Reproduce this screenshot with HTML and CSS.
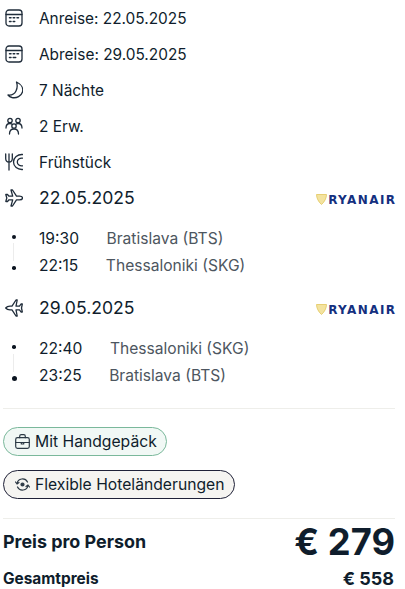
FILE: index.html
```html
<!DOCTYPE html>
<html lang="de">
<head>
<meta charset="utf-8">
<title>Angebot</title>
<link rel="stylesheet" href="styles.css">
</head>
<body>
<main class="card">
  <ul class="facts">
    <li class="fact">
      <svg class="icon" viewBox="0 0 18 18"><rect x="1" y="1" width="16" height="16" rx="3"/><path d="M1 5.500h16"/><path class="pip" d="M4.500 8.700h1.500M8.200 8.700h1.500M12 8.700h1.500M4.500 12.500h1.500M8.200 12.500h1.500"/></svg>
      <span>Anreise: 22.05.2025</span>
    </li>
    <li class="fact">
      <svg class="icon" viewBox="0 0 18 18"><rect x="1" y="1" width="16" height="16" rx="3"/><path d="M1 5.500h16"/><path class="pip" d="M4.500 8.700h1.500M8.200 8.700h1.500M12 8.700h1.500M4.500 12.500h1.500M8.200 12.500h2.500"/></svg>
      <span>Abreise: 29.05.2025</span>
    </li>
    <li class="fact">
      <svg class="icon" viewBox="0 0 18 18"><path d="M11.500 1C16 3 18.500 7 17.500 11 16.500 15 11.500 17.500 7 16.500 5.200 16 3.800 15 3 14c3.500.5 6.500-1 8-4 1.500-3 1.500-6 .5-9z"/></svg>
      <span>7 Nächte</span>
    </li>
    <li class="fact">
      <svg class="icon" viewBox="0 0 18 18"><circle cx="5" cy="3.500" r="2.200"/><circle cx="13" cy="3.500" r="2.200"/><circle cx="9" cy="9" r="2.200"/><path d="M1 11c0-3 1.500-4.500 4-4.500.8 0 1.300.2 1.800.5M17 11c0-3-1.500-4.500-4-4.500-.8 0-1.300.2-1.800.5M4.500 17c0-3 1.800-5 4.500-5s4.500 2 4.500 5"/></svg>
      <span>2 Erw.</span>
    </li>
    <li class="fact">
      <svg class="icon" viewBox="0 0 18 18"><path d="M.7 1v4.500c0 2.200 1.300 3.500 3.300 3.500s3.300-1.300 3.300-3.500V1M4 1v16"/><path d="M17.500 1.500C12.500 1.200 8.500 4.500 8.500 9s4 7.800 9 7.500M17.500 5.200c-2.800-.3-5.200 1.200-5.200 3.800s2.400 4.100 5.200 3.800"/></svg>
      <span>Frühstück</span>
    </li>
  </ul>

  <section class="leg">
    <header class="leg-head">
      <svg class="icon" viewBox="0 0 18 18"><path d="M17.500 9c0-1.200-1.200-1.800-3-1.800h-3L7.500 1H6l1.700 6.200H4L2.500 5.500H.8L1.800 9l-1 3.500h1.700L4 10.800h3.700L6 17h1.500l4-6.200h3c1.800 0 3-.6 3-1.800z"/></svg>
      <span class="leg-date">22.05.2025</span>
      <span class="brand"><svg class="harp" viewBox="0 0 11 11"><path d="M.5.500h10c0 3.500-2 7.500-5 10C2.500 8 .5 4 .5.500z"/></svg><span class="brand-name">RYANAIR</span></span>
    </header>
    <div class="stops">
      <div class="rail"><i class="dot"></i><i class="line"></i><i class="dot dot-small dot-end"></i></div>
      <div class="times">
        <div class="stop"><span>19:30</span><span class="place">Bratislava (BTS)</span></div>
        <div class="stop"><span>22:15</span><span class="place">Thessaloniki (SKG)</span></div>
      </div>
    </div>
  </section>

  <section class="leg">
    <header class="leg-head">
      <svg class="icon" viewBox="0 0 18 18"><path d="M.7 9c1-1.300 2.500-1.800 4.300-1.800h2L11 1h1.200l-1.200 6.200h3.500L16 5h1.300l-.8 4 .8 4H16l-1.500-2.200H11L12.200 17H11l-4-6.200H5C3.200 10.800 1.700 10.300.7 9z"/></svg>
      <span class="leg-date">29.05.2025</span>
      <span class="brand"><svg class="harp" viewBox="0 0 11 11"><path d="M.5.500h10c0 3.500-2 7.500-5 10C2.500 8 .5 4 .5.500z"/></svg><span class="brand-name">RYANAIR</span></span>
    </header>
    <div class="stops">
      <div class="rail"><i class="dot dot-small dot-start"></i><i class="line line-late"></i><i class="dot dot-large"></i></div>
      <div class="times">
        <div class="stop"><span>22:40</span><span class="place">Thessaloniki (SKG)</span></div>
        <div class="stop"><span>23:25</span><span class="place">Bratislava (BTS)</span></div>
      </div>
    </div>
  </section>

  <div class="chips">
    <span class="chip chip-green">
      <svg class="chip-icon" viewBox="0 0 15 15"><rect x=".7" y="3.700" width="13.600" height="10.600" rx="1.800"/><path d="M4.700 3.700V2.200A1.500 1.500 0 0 1 6.200.7h2.600a1.500 1.500 0 0 1 1.500 1.500v1.500M.7 8.500h13.600M6.300 8.500v1.500h2.400V8.500"/></svg>
      <span>Mit Handgepäck</span>
    </span>
    <span class="chip chip-dark">
      <svg class="chip-icon" viewBox="0 0 15 15"><path d="M2 6.500A5.600 5.600 0 0 1 12.500 5M13 8.500A5.600 5.600 0 0 1 2.500 10M.5 5l1.500 2L4 5.500M14.500 10L13 8l-2 1.500"/><circle class="core" cx="7.500" cy="7.500" r="1.500"/></svg>
      <span>Flexible Hoteländerungen</span>
    </span>
  </div>

  <section class="prices">
    <div class="price-row price-main">
      <span class="price-label">Preis pro Person</span>
      <span class="price-big">€ 279</span>
    </div>
    <div class="price-row total">
      <span>Gesamtpreis</span>
      <span class="price-total">€ 558</span>
    </div>
  </section>
</main>
</body>
</html>
```
FILE: styles.css
```css
* { box-sizing: border-box; }
html, body { margin: 0; padding: 0; background: #fff; }
body {
  font-family: Inter, "Liberation Sans", sans-serif;
  color: #0f1d2c;
  overflow: hidden;
}
.card { width: 405px; height: 589px; padding: 0 10px 0 3px; }
.facts { list-style: none; margin: 0; padding: 0; }
.fact {
  display: flex;
  align-items: center;
  gap: 16px;
  height: 36px;
  padding-left: 2px;
  font-size: 15.400px;
}
.icon {
  width: 18px;
  height: 18px;
  flex: none;
  fill: none;
  stroke: #1f2c3a;
  stroke-width: 1.300;
  stroke-linecap: round;
  stroke-linejoin: round;
}
.pip { stroke-width: 1.500; }
.leg { display: block; }
.leg-head {
  display: flex;
  align-items: center;
  gap: 16px;
  height: 36px;
  padding-left: 2px;
}
.leg-date { font-size: 17.600px; padding-bottom: 2px; }
.brand { margin-left: auto; padding-top: 3px; display: flex; align-items: center; gap: 1px; }
.harp { width: 11px; height: 11px; fill: #f3e3a0; stroke: #e2c65c; stroke-width: .8; }
.brand-name {
  font-family: "DejaVu Sans", sans-serif;
  font-weight: 700;
  font-size: 12px;
  letter-spacing: 1.400px;
  margin-right: -1.400px;
  color: #14307f;
}
.stops { display: flex; padding: 8px 0 8px 8px; margin-bottom: 3px; }
.rail { width: 28px; display: flex; flex-direction: column; align-items: flex-start; padding: 10.500px 0 0 .750px; }
.dot { width: 4.500px; height: 4.500px; border-radius: 50%; background: #0b1420; flex: none; }
.dot-small { width: 3.500px; height: 3.500px; margin-left: .500px; }
.dot-end { margin-top: 5px; }
.dot-start { margin-top: .500px; }
.dot-large { width: 5px; height: 5px; margin-top: 3.800px; }
.line { width: 1px; height: 18px; margin: 4px 0 0 1.300px; background: #ececec; flex: none; }
.line-late { margin-top: 5.500px; }
.times { display: flex; flex-direction: column; font-size: 15.600px; padding-top: 1px; }
.stop { display: flex; gap: 27.500px; height: 27px; align-items: center; }
.place { color: #4d5660; }
.chips {
  border-top: 1px solid #eeeeea;
  margin-top: 11px;
  padding-top: 18px;
  display: flex;
  flex-direction: column;
  align-items: flex-start;
  gap: 14px;
}
.chip {
  display: inline-flex;
  align-items: center;
  gap: 5px;
  height: 29px;
  padding: 0 9px 0 11px;
  border-radius: 15px;
  font-size: 15.700px;
  border: 1px solid;
}
.chip-green { background: #f1f8f5; border-color: #7ab89b; }
.chip-dark { background: #f5f4f1; border-color: #1f2138; padding-right: 10px; }
.chip-icon {
  width: 15px;
  height: 15px;
  flex: none;
  fill: none;
  stroke: #2c3945;
  stroke-width: 1.200;
  stroke-linejoin: round;
  stroke-linecap: round;
}
.core { fill: #2c3945; }
.prices { border-top: 1px solid #eeeeea; margin-top: 19px; }
.price-row { display: flex; justify-content: space-between; align-items: center; }
.price-main { height: 45px; }
.price-label { font-size: 17.900px; font-weight: 700; }
.price-big { font-size: 36.300px; font-weight: 700; }
.total { font-size: 15.400px; font-weight: 700; height: 28px; }
.price-total { font-size: 18px; margin-right: 1px; }
```
